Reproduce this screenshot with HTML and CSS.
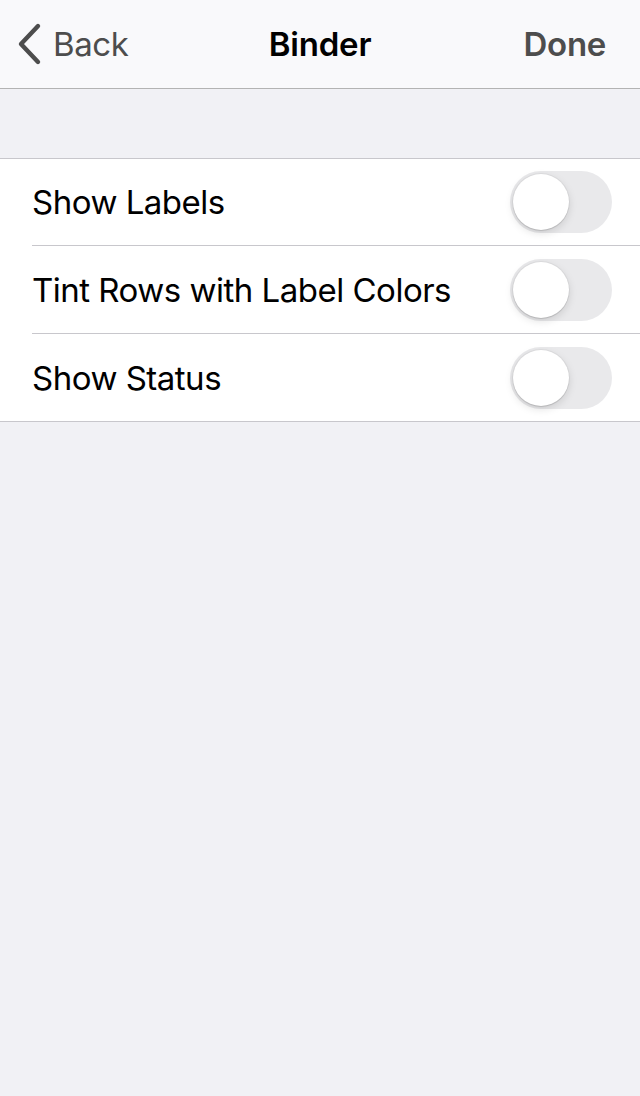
FILE: index.html
```html
<!DOCTYPE html>
<html lang="en">
<head>
<meta charset="utf-8">
<title>Binder</title>
<link rel="stylesheet" href="styles.css">
</head>
<body>
<header class="navbar">
  <a class="nav-back">
    <svg class="chevron" width="30" height="44" viewBox="0 0 30 44" aria-hidden="true">
      <path d="M22 4 L5 22 L22 40" fill="none" stroke="#4d4d4d" stroke-width="4.4" stroke-linecap="round" stroke-linejoin="round"/>
    </svg>
    <span>Back</span>
  </a>
  <h1 class="nav-title">Binder</h1>
  <a class="nav-done">Done</a>
</header>
<main class="content">
  <ul class="group">
    <li class="row"><span class="row-label">Show Labels</span><span class="switch"><span class="knob"></span></span></li>
    <li class="row"><span class="row-label">Tint Rows with Label Colors</span><span class="switch"><span class="knob"></span></span></li>
    <li class="row"><span class="row-label">Show Status</span><span class="switch"><span class="knob"></span></span></li>
  </ul>
</main>
</body>
</html>
```
FILE: styles.css
```css
* { box-sizing: border-box; }
html, body { margin: 0; padding: 0; }
body {
  background: #f1f1f5;
  font-family: Inter, "Liberation Sans", sans-serif;
  width: 640px;
  height: 1096px;
}
.navbar {
  height: 89px;
  background: #f9f9fb;
  border-bottom: 1px solid #b3b3b3;
  display: grid;
  grid-template-columns: 1fr auto 1fr;
  align-items: center;
  padding: 0 34px;
}
.nav-back {
  display: flex;
  align-items: center;
  gap: 7px;
  margin-left: -18px;
  color: #4d4d4d;
  font-size: 33px;
  letter-spacing: -0.4px;
}
.chevron { display: block; }
.nav-title {
  margin: 0;
  font-size: 33px;
  font-weight: 600;
  color: #000;
  letter-spacing: -0.2px;
}
.nav-done {
  justify-self: end;
  color: #4d4d4d;
  font-size: 33px;
  font-weight: 600;
  letter-spacing: -0.3px;
}
.content { padding-top: 69px; }
.group {
  list-style: none;
  margin: 0;
  padding: 0 0 0 32px;
  background: #fff;
  border-top: 1px solid #c8c7cc;
  border-bottom: 1px solid #c8c7cc;
}
.row {
  height: 88px;
  display: flex;
  align-items: center;
  justify-content: space-between;
  padding-right: 28px;
  border-bottom: 1px solid #c8c7cc;
}
.row:first-child { height: 87px; }
.row:last-child { border-bottom: none; height: 87px; }
.row-label {
  font-size: 33px;
  color: #000;
  letter-spacing: -0.5px;
}
.switch {
  width: 102px;
  height: 62px;
  border-radius: 31px;
  background: #e9e9eb;
  padding: 3px;
  display: flex;
  align-items: center;
}
.knob {
  width: 56px;
  height: 56px;
  border-radius: 50%;
  background: #fff;
  box-shadow: 0 3px 8px rgba(0,0,0,0.13), 0 1px 1px rgba(0,0,0,0.1), 0 0 0 1px rgba(0,0,0,0.04);
}
```
